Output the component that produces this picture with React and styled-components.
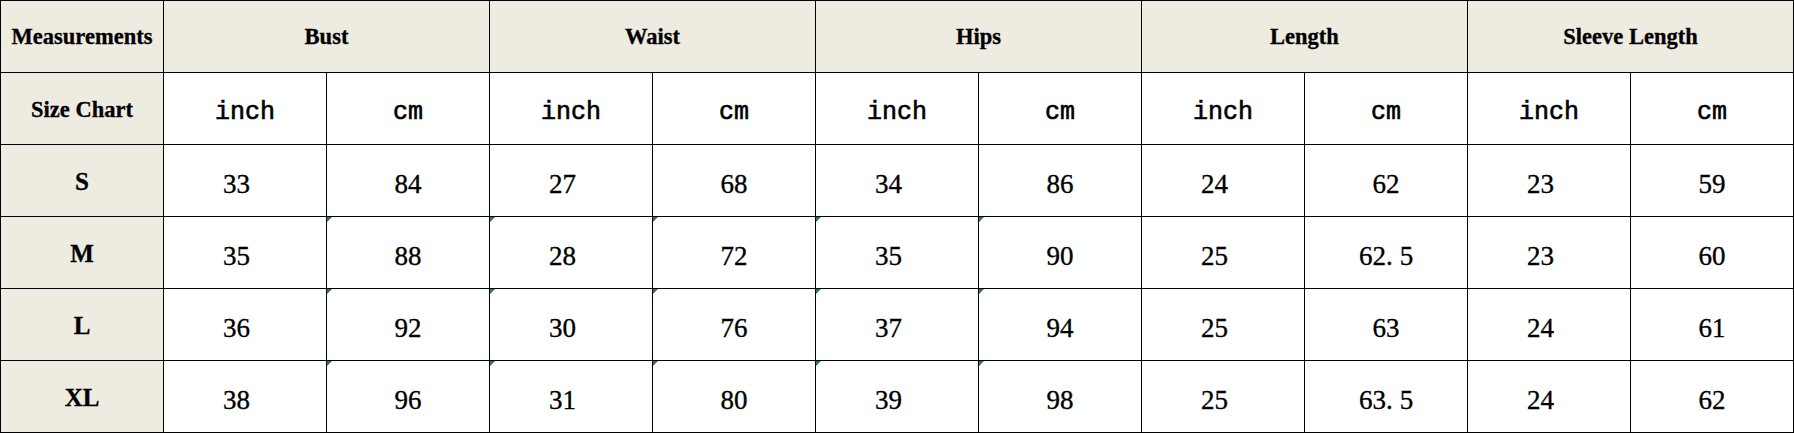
import React from 'react';
import styled, { createGlobalStyle } from 'styled-components';

const GlobalStyle = createGlobalStyle`
  html, body {
    margin: 0;
    padding: 0;
    background: #ffffff;
  }
`;

const Sheet = styled.div`
  display: grid;
  grid-template-columns: repeat(11, 1fr);
  grid-auto-rows: 72px;
  width: 1794px;
  border-top: 1.5px solid #000;
  border-left: 1.5px solid #000;
  box-sizing: border-box;
`;

const Cell = styled.div`
  position: relative;
  display: flex;
  align-items: center;
  justify-content: center;
  box-sizing: border-box;
  border-right: 1.5px solid #000;
  border-bottom: 1.5px solid #000;
  background: ${props => (props.head ? '#eeebe1' : '#ffffff')};
  grid-column: span ${props => props.span || 1};
  color: #000;
`;

const HeadText = styled.span`
  font-family: "Liberation Serif", "Times New Roman", serif;
  font-weight: bold;
  font-size: ${props => props.size || 22.5}px;
  -webkit-text-stroke: 0.3px #000;
  padding-top: ${props => props.drop || 0}px;
`;

const UnitText = styled.span`
  font-family: "Liberation Mono", "Courier New", monospace;
  font-size: 25px;
  -webkit-text-stroke: 0.6px #000;
  padding-top: 8px;
`;

const NumText = styled.span`
  font-family: "Liberation Serif", "Times New Roman", serif;
  font-size: 27px;
  -webkit-text-stroke: 0.35px #000;
  padding-top: 8px;
  padding-right: ${props => (props.inch ? 17 : 0)}px;
`;

const Dot = styled.span`
  padding-right: 7px;
`;

// little green triangle excel draws on "number stored as text" cells
const Flag = styled.span`
  position: absolute;
  top: 0;
  left: 0;
  width: 0;
  height: 0;
  border-top: 5px solid #2e7d32;
  border-right: 5px solid transparent;
`;

const groups = ['Bust', 'Waist', 'Hips', 'Length', 'Sleeve Length'];

const sizes = [
  { name: 'S', values: ['33', '84', '27', '68', '34', '86', '24', '62', '23', '59'], flagged: false },
  { name: 'M', values: ['35', '88', '28', '72', '35', '90', '25', '62.5', '23', '60'], flagged: true },
  { name: 'L', values: ['36', '92', '30', '76', '37', '94', '25', '63', '24', '61'], flagged: true },
  { name: 'XL', values: ['38', '96', '31', '80', '39', '98', '25', '63.5', '24', '62'], flagged: true },
];

function renderNumber(v) {
  if (!v.includes('.')) return v;
  let [whole, frac] = v.split('.');
  return (
    <>
      {whole}<Dot>.</Dot>{frac}
    </>
  );
}

function App() {
  return (
    <>
      <GlobalStyle />
      <Sheet>
        <Cell head><HeadText>Measurements</HeadText></Cell>
        {groups.map(g => (
          <Cell head span={2} key={g}><HeadText>{g}</HeadText></Cell>
        ))}

        <Cell head><HeadText drop={2}>Size Chart</HeadText></Cell>
        {groups.map(g => (
          <React.Fragment key={g}>
            <Cell><UnitText>inch</UnitText></Cell>
            <Cell><UnitText>cm</UnitText></Cell>
          </React.Fragment>
        ))}

        {sizes.map(size => (
          <React.Fragment key={size.name}>
            <Cell head><HeadText size={25} drop={2}>{size.name}</HeadText></Cell>
            {size.values.map((v, i) => (
              <Cell key={i}>
                {size.flagged && i >= 1 && i <= 5 ? <Flag /> : null}
                <NumText inch={i % 2 === 0}>{renderNumber(v)}</NumText>
              </Cell>
            ))}
          </React.Fragment>
        ))}
      </Sheet>
    </>
  );
}

export default App;
